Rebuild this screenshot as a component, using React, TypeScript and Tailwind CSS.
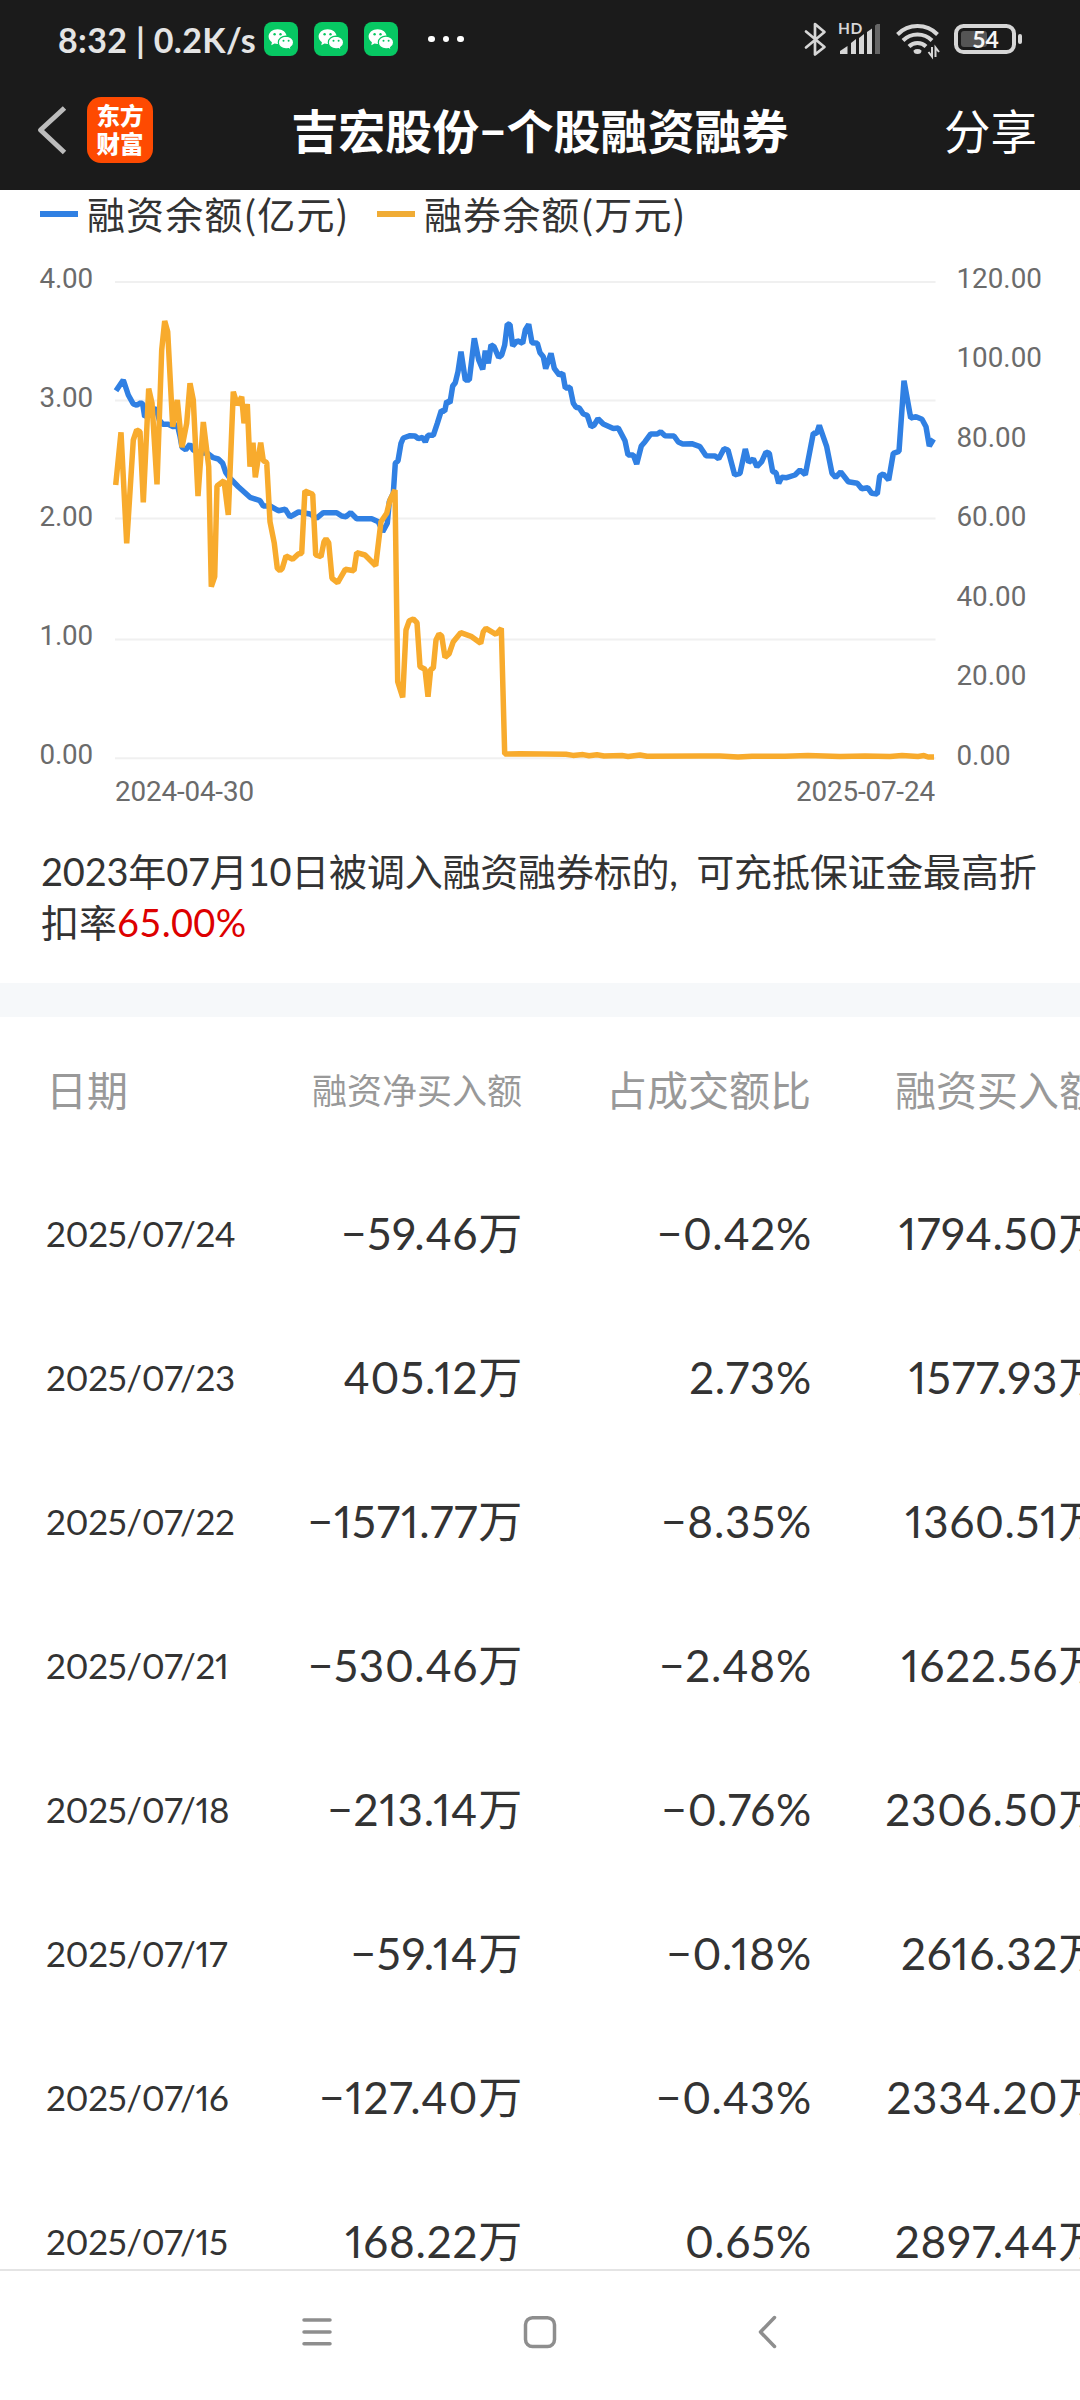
import React from "react";

const SANS = "font-['Lato','Noto_Sans_CJK_SC',sans-serif]";

const financing =
  "116,390.7 123.3,380 128.3,395 133.3,404 136.7,405.3 140.7,402.7 142.7,404 144.7,416.7 150,414 156,408 159.3,420 162.7,424.3 168.3,424.3 173.3,426.7 177.3,424.7 180,436 182,447.3 185.7,449.7 190,444.3 193.3,450 200,453 206.7,452.7 213.3,457.7 218.3,459 222.7,463.3 225.7,472.3 230,478.3 238.3,486.7 250,497.3 260,500.7 263.3,506 270,506 278.3,510.7 285.3,509.3 290,516.7 293.3,515 298.5,512 310,514 316.7,518.2 323.3,512.7 336.7,512.7 341.7,516 346,516.7 350.7,512.7 356.7,518.7 371.7,518.7 378.3,521.7 382.7,531.7 387.3,523.3 389.3,501.7 393.3,493.3 395.3,463.3 398,460.7 401,443.3 403.3,438 410,435.7 415,436 418.3,438.7 422.7,437.3 425.3,442 428,435.3 433.3,435.3 437.3,423.3 441.3,410.7 444.7,411.3 446.7,401.3 450,402.7 452.7,386 455.3,382.7 458,371.7 461,351.7 465.3,380 469.3,380 474.3,338.3 478.7,360 482.7,369.3 485.3,350.7 488.3,363.3 491,345 494,346.7 498.7,357.3 501.7,355 504.7,345 507.3,324 510,324.7 512.7,346 517.3,340.7 522.7,343.3 525.3,330 528.7,324.3 532,342.7 537.3,343.3 540,352.7 543.3,356.7 545.7,368.7 551,353.3 554.3,368.3 559.3,375 562.7,373.3 565.3,388 570,387.3 573.3,403.3 576,407.3 579.3,408 583.3,414 587.3,415.3 591,426.7 594,425.3 598,418.7 603.3,424 613.3,428.5 618.3,428 625,440.7 628,455 633.3,455 636.7,464 641.3,446 645,441.7 650.7,434 657.3,434 660.7,431.7 665,435.7 674,436 678.3,442 682.7,444 691.7,443.7 700,446.7 706,455.7 715,456 718.7,458.7 724,448.7 728,450 734.7,475 740,473.3 745.3,449 748.7,462.3 753.3,459 757,466.7 761.7,461.7 766,452 769.3,453.3 772.7,471.7 776,472.7 778.7,483.3 781.7,477.3 786.7,477.7 795,475 800,470 805.3,474.7 813.3,433.3 816.7,433.3 819.3,425.3 826.7,446.7 832,473.3 835.7,477.3 840.7,472 848.3,481.7 857.3,483.3 861.7,488.7 867.7,487.7 871.7,493.3 877.3,494 879.7,476 883.3,474 888.7,480 893.3,453.3 899,451.3 904,380.7 910.7,418 916,416.7 922,419.3 926,426.7 929.3,446 933.5,439";

const lending =
  "115.7,485 121,432.3 126.7,543.3 133.3,440 136.7,430 140,431.7 143.3,502.3 148.7,388.7 152,403 157,484.3 161.7,350 164.7,321 167.7,331.7 172.7,426.7 177.3,400 182,447.3 186.7,423.3 190,383.3 193.3,400 198,496 203.3,422 208.7,466.7 211.3,586.7 214.7,576.7 217,486 224,480.7 228.3,515 233.3,391.7 237.3,405 241.7,396.7 244,423.3 247.3,404 250,466.7 253,442.7 255.3,477.3 260.7,442.7 263.3,460.7 266.7,462.7 270,521.7 274.3,543.3 277.3,568.3 280,570.7 282.3,568.3 286,556 292.7,559.3 298.3,554 301.7,553.3 304.9,491 312.7,494.3 315.7,555 321,556.7 324,541.7 326,538.7 328.7,542.7 332,578.3 337.7,582.7 345.3,569.3 354,570.7 356.7,552.7 365,555 375.7,565.7 381,521.7 386.7,513.3 390,500 395,490 397.7,681.7 402.7,697.3 406,630 409.3,620.7 413.3,619 417,622.7 420,666.7 425,669.3 428,696.7 430.7,669.3 433.3,668.3 436,640 439,634 441.7,636 445,657.3 449,654 453.3,641.7 460.7,632.7 471.7,636.7 480.7,643.3 483.3,631.7 486,628.3 496,634.3 501.3,628.3 504.7,754 520,753.8 566,754.2 573,755.4 583,754.6 589,755.8 597,754.8 604,756 622,755.6 628,756.4 640,755 647,756.3 700,756 720,756 738,757 752,756.2 785,756.3 808,755.4 840,756.4 865,756 890,756.5 902,755.5 918,756.4 924,755.6 928,757 934,757";

const rows = [
  ["2025/07/24", "−59.46万", "−0.42%", "1794.50万"],
  ["2025/07/23", "405.12万", "2.73%", "1577.93万"],
  ["2025/07/22", "−1571.77万", "−8.35%", "1360.51万"],
  ["2025/07/21", "−530.46万", "−2.48%", "1622.56万"],
  ["2025/07/18", "−213.14万", "−0.76%", "2306.50万"],
  ["2025/07/17", "−59.14万", "−0.18%", "2616.32万"],
  ["2025/07/16", "−127.40万", "−0.43%", "2334.20万"],
  ["2025/07/15", "168.22万", "0.65%", "2897.44万"],
];

function WeChat() {
  return (
    <svg viewBox="0 0 34 34" className="h-[34px] w-[34px]">
      <rect width="34" height="34" rx="8" fill="#07c863" />
      <path d="M13.6 7.2c-5 0-9 3.2-9 7.3 0 2.3 1.3 4.3 3.3 5.7l-.6 3.1 3.2-1.8c1 .3 2 .4 3.1.4 5 0 9-3.2 9-7.4s-4-7.300-9-7.300z" fill="#fff" />
      <path d="M22 14.200c-4.400 0-7.700 2.800-7.700 6.300s3.300 6.400 7.700 6.400c.9 0 1.700-.1 2.500-.3l2.700 1.400-.6-2.400c1.900-1.200 3-3 3-5.100 0-3.500-3.300-6.300-7.600-6.300z" fill="#fff" stroke="#07c863" strokeWidth="1.200" />
      <circle cx="10.600" cy="12.300" r="1.200" fill="#07c863" />
      <circle cx="16.500" cy="12.300" r="1.200" fill="#07c863" />
      <circle cx="19.500" cy="18.700" r="1" fill="#07c863" />
      <circle cx="24.600" cy="18.700" r="1" fill="#07c863" />
    </svg>
  );
}

function StatusIcons() {
  return (
    <svg viewBox="800 16 226 46" className="h-[46px] w-[226px]" fill="none" stroke="#d6d6d6">
      <path d="M806 31.500L824.500 47L815 54.500V24L824.500 32L806 47.500" strokeWidth="2.700" strokeLinejoin="round" strokeLinecap="round" />
      <text x="838" y="34" fontSize="15.500" fontWeight="700" fill="#d6d6d6" stroke="none" letterSpacing="0.500">HD</text>
      <g fill="#d6d6d6" stroke="none">
        <path d="M840 54V51l7.500-5V54z" />
        <path d="M851 54V43l5-4V54z" />
        <path d="M859 54V38l5-4V54z" />
        <path d="M867 54V32l5-3.500V54z" />
        <path d="M875 54V25.500l2-1.500h3V54z" fill="#666" />
      </g>
      <g strokeWidth="4">
        <path d="M897.500 34.500a28 28 0 0 1 40 0" />
        <path d="M903 40.500a20.500 20.500 0 0 1 29 0" />
        <path d="M909 46.500a12 12 0 0 1 17 0" />
      </g>
      <path d="M913.500 50.500a5.500 4.500 0 0 1 8 0q0 3.500-4 3.500t-4-3.500z" fill="#d6d6d6" stroke="none" />
      <path d="M932 47v9.500l-3.500-4.500M935.500 57V47.500l3.500 4.500" strokeWidth="2" />
      <rect x="961" y="31" width="26" height="16" rx="3" fill="#555" stroke="none" />
      <rect x="956" y="26" width="58" height="26" rx="7.500" strokeWidth="4" />
      <rect x="1018" y="34" width="4" height="10" rx="2" fill="#d6d6d6" stroke="none" />
      <text x="985.500" y="47.500" fontSize="23" fontWeight="700" textAnchor="middle" fill="#f5f5f5" stroke="none">54</text>
    </svg>
  );
}

function Chart() {
  return (
    <svg viewBox="0 240 1080 592" className="block h-[592px] w-[1080px] font-['Roboto',sans-serif]">
      {[282, 400.5, 518.500, 639.500, 758.300].map((y) => (
        <line key={y} x1="115" x2="935.500" y1={y} y2={y} stroke="#f0f0f0" strokeWidth="2" />
      ))}
      <g fill="#6b6b6b" fontSize="27.800">
        {["4.00", "3.00", "2.00", "1.00", "0.00"].map((t, i) => (
          <text key={t} x="39.500" y={288 + i * 119.100} textLength="53.500">{t}</text>
        ))}
        {["120.00", "100.00", "80.00", "60.00", "40.00", "20.00", "0.00"].map((t, i) => (
          <text key={t} x="956.500" y={288 + i * 79.450}>{t}</text>
        ))}
        <text x="115" y="801" textLength="139">2024-04-30</text>
        <text x="935" y="801" textAnchor="end" textLength="139">2025-07-24</text>
      </g>
      <polyline points={financing} fill="none" stroke="#3080e3" strokeWidth="5.500" strokeLinejoin="bevel" />
      <polyline points={lending} fill="none" stroke="#f8ab2d" strokeWidth="5.500" strokeLinejoin="bevel" />
    </svg>
  );
}

export default function App() {
  return (
    <div className={`${SANS} flex h-[2400px] w-[1080px] flex-col overflow-hidden bg-white text-[#333]`}>
      <header className="h-[190px] shrink-0 bg-[#1b1b1b]">
        <div className="flex h-[78px] items-center pr-[54px] pl-[58px] text-[#e4e4e4]">
          <span className="w-[206px] text-[34px] font-bold tracking-[0.350px] whitespace-nowrap">8:32 | 0.2K/s</span>
          <div className="flex gap-4">
            <WeChat />
            <WeChat />
            <WeChat />
          </div>
          <div className="ml-[30px] flex gap-2">
            <i className="size-[6.500px] rounded-full bg-white" />
            <i className="size-[6.500px] rounded-full bg-white" />
            <i className="size-[6.500px] rounded-full bg-white" />
          </div>
          <div className="ml-auto">
            <StatusIcons />
          </div>
        </div>
        <div className="grid h-[104px] grid-cols-[260px_1fr_260px] items-center text-white">
          <div className="flex items-center pl-[36px]">
            <svg viewBox="0 0 34 52" className="h-[52px] w-[34px]" fill="none" stroke="#bcbcbc" strokeWidth="5">
              <path d="M28.500 4L4.500 26L28.500 48.500" strokeLinejoin="round" />
            </svg>
            <div className="ml-[17px] flex size-[66px] flex-col items-center justify-center rounded-[14px] bg-[#fe4a01] text-[23.500px] leading-[28px] font-black">
              <span>东方</span>
              <span>财富</span>
            </div>
          </div>
          <h1 className="pt-[2px] text-center text-[47px] font-bold whitespace-nowrap">吉宏股份−个股融资融券</h1>
          <span className="pt-[3px] pr-[43px] text-right text-[46.500px]">分享</span>
        </div>
      </header>

      <div className="flex h-[50px] shrink-0 items-center pl-10 text-[38px] whitespace-nowrap">
        <i className="-mt-[2px] h-[6px] w-[38px] bg-[#3080e3]" />
        <span className="-mt-[6px] ml-[9px] w-[290px] font-['Noto_Sans_CJK_SC',sans-serif] tracking-[1.100px]">融资余额(亿元)</span>
        <i className="-mt-[2px] h-[6px] w-[38px] bg-[#f0ac35]" />
        <span className="-mt-[6px] ml-[9px] font-['Noto_Sans_CJK_SC',sans-serif] tracking-[1.100px]">融券余额(万元)</span>
      </div>

      <div className="h-[592px] shrink-0">
        <Chart />
      </div>

      <p className="h-[151px] shrink-0 pt-[14px] pl-[41px] text-[38px] leading-[51px] whitespace-nowrap">
        <span className="tracking-[-0.200px] [word-spacing:9px]">2023年07月10日被调入融资融券标的, 可充抵保证金最高折</span>
        <br />
        扣率<span className="tracking-[0.300px] text-[#dd0000]">65.00%</span>
      </p>

      <div className="h-[34px] shrink-0 bg-[#f6f8fa]" />

      <section className="h-[1252px] shrink-0 overflow-hidden">
        <div className="grid h-[144px] w-[1102px] grid-cols-[224px_252px_289px_289px] items-center pt-[3px] pl-[46px] text-right text-[41px] whitespace-nowrap text-[#999]">
          <span className="text-left">日期</span>
          <span className="text-[35px]">融资净买入额</span>
          <span>占成交额比</span>
          <span>融资买入额</span>
        </div>
        {rows.map((r) => (
          <div key={r[0]} className="grid h-[144px] w-[1102px] grid-cols-[224px_253px_289px_291px] items-center pl-[46px] text-right text-[44px] tracking-[0.800px] whitespace-nowrap [font-feature-settings:'pnum']">
            <span className="text-left text-[35px] tracking-[-0.350px]">{r[0]}</span>
            <span>{r[1]}</span>
            <span>{r[2]}</span>
            <span>{r[3]}</span>
          </div>
        ))}
      </section>

      <nav className="h-[131px] shrink-0 border-t-2 border-[#e4e4e4] bg-white">
        <svg viewBox="0 2271 1080 129" className="block h-[129px] w-[1080px]" fill="none" stroke="#8e8e8e" strokeWidth="3.500" strokeLinecap="round">
          <path d="M304 2320H330M304 2332H330M304 2343.700H330" />
          <rect x="525.500" y="2317.700" width="29" height="28.800" rx="7" />
          <path d="M774.500 2317.500L760.500 2332L774.500 2346.500" strokeLinejoin="round" />
        </svg>
      </nav>
    </div>
  );
}
